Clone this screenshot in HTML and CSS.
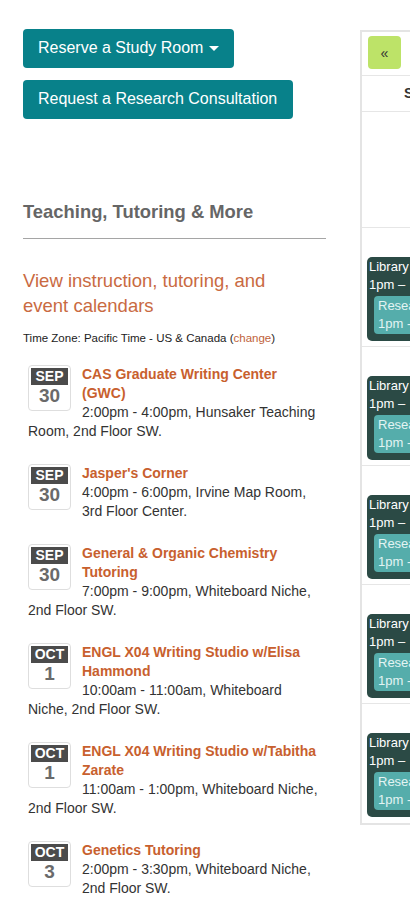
FILE: index.html
```html
<!DOCTYPE html>
<html lang="en">
<head>
<meta charset="utf-8">
<title>Library</title>
<link rel="stylesheet" href="styles.css">
</head>
<body>
<div class="page">
  <div class="left">
    <div class="buttons">
      <a class="btn" href="#">Reserve a Study Room <span class="caret"></span></a>
      <a class="btn" href="#">Request a Research Consultation</a>
    </div>
    <h2 class="heading">Teaching, Tutoring &amp; More</h2>
    <hr class="rule">
    <a class="callink" href="#">View instruction, tutoring, and event calendars</a>
    <p class="tz">Time Zone: Pacific Time - US &amp; Canada (<a href="#">change</a>)</p>
    <div class="events">
      <div class="event">
        <div class="badge"><div class="mon">SEP</div><div class="day">30</div></div>
        <a class="title" href="#">CAS Graduate Writing Center (GWC)</a>
        <div class="desc">2:00pm - 4:00pm, Hunsaker Teaching Room, 2nd Floor SW.</div>
      </div>
      <div class="event">
        <div class="badge"><div class="mon">SEP</div><div class="day">30</div></div>
        <a class="title" href="#">Jasper's Corner</a>
        <div class="desc">4:00pm - 6:00pm, Irvine Map Room, 3rd Floor Center.</div>
      </div>
      <div class="event">
        <div class="badge"><div class="mon">SEP</div><div class="day">30</div></div>
        <a class="title" href="#">General &amp; Organic Chemistry Tutoring</a>
        <div class="desc">7:00pm - 9:00pm, Whiteboard Niche, 2nd Floor SW.</div>
      </div>
      <div class="event">
        <div class="badge"><div class="mon">OCT</div><div class="day">1</div></div>
        <a class="title" href="#">ENGL X04 Writing Studio w/Elisa Hammond</a>
        <div class="desc">10:00am - 11:00am, Whiteboard Niche, 2nd Floor SW.</div>
      </div>
      <div class="event">
        <div class="badge"><div class="mon">OCT</div><div class="day">1</div></div>
        <a class="title" href="#">ENGL X04 Writing Studio w/Tabitha Zarate</a>
        <div class="desc">11:00am - 1:00pm, Whiteboard Niche, 2nd Floor SW.</div>
      </div>
      <div class="event">
        <div class="badge"><div class="mon">OCT</div><div class="day">3</div></div>
        <a class="title" href="#">Genetics Tutoring</a>
        <div class="desc">2:00pm - 3:30pm, Whiteboard Niche, 2nd Floor SW.</div>
      </div>
    </div>
  </div>
  <div class="cal">
    <div class="toolbar"><button class="prev">&laquo;</button></div>
    <div class="dayhead">Sun 9/30</div>
    <div class="row row-empty"></div>
    <div class="row"><div class="ev">Library Hours<br>1pm –&nbsp;&nbsp;5pm<div class="sub">Research Help<br>1pm - 5pm</div></div></div>
    <div class="row"><div class="ev">Library Hours<br>1pm –&nbsp;&nbsp;5pm<div class="sub">Research Help<br>1pm - 5pm</div></div></div>
    <div class="row"><div class="ev">Library Hours<br>1pm –&nbsp;&nbsp;5pm<div class="sub">Research Help<br>1pm - 5pm</div></div></div>
    <div class="row"><div class="ev">Library Hours<br>1pm –&nbsp;&nbsp;5pm<div class="sub">Research Help<br>1pm - 5pm</div></div></div>
    <div class="row"><div class="ev">Library Hours<br>1pm –&nbsp;&nbsp;5pm<div class="sub">Research Help<br>1pm - 5pm</div></div></div>
  </div>
</div>
</body>
</html>
```
FILE: styles.css
```css
html, body {
  margin: 0;
  padding: 0;
  background: #fff;
  overflow: hidden;
}
body {
  font-family: "Liberation Sans", Arial, sans-serif;
  color: #333;
  width: 410px;
  height: 910px;
}
.page {
  display: flex;
  align-items: flex-start;
  padding-top: 29px;
}
.left {
  flex: 0 0 303px;
  margin-left: 23px;
}
.buttons {
  display: flex;
  flex-direction: column;
  align-items: flex-start;
  gap: 12px;
}
.btn {
  display: inline-block;
  background: #08818a;
  color: #fff;
  text-decoration: none;
  font-size: 16px;
  line-height: 20px;
  padding: 9px 15px 10px;
  border-radius: 4px;
}
.btn:last-child {
  padding-right: 16px;
}
.caret {
  display: inline-block;
  width: 0;
  height: 0;
  border-left: 5px solid transparent;
  border-right: 5px solid transparent;
  border-top: 5px solid #fff;
  vertical-align: middle;
  margin-left: 1px;
}
.heading {
  margin: 83px 0 0;
  font-size: 18.4px;
  line-height: 20px;
  font-weight: bold;
  color: #666;
}
.rule {
  margin: 16px 0 0;
  border: 0;
  border-top: 1px solid #a5a5a5;
  height: 0;
}
.callink {
  display: block;
  margin-top: 29px;
  width: 270px;
  font-size: 18.5px;
  line-height: 25px;
  color: #c96a42;
  text-decoration: none;
}
.tz {
  margin: 12px 0 0;
  font-size: 11.5px;
  line-height: 17px;
  color: #222;
}
.tz a {
  color: #c0623a;
  text-decoration: none;
}
.events {
  margin-top: 19px;
  padding: 0 8px 0 5px;
}
.event {
  margin-bottom: 24px;
  font-size: 14px;
  line-height: 19px;
}
.event::after {
  content: "";
  display: block;
  clear: both;
}
.badge {
  float: left;
  width: 37px;
  margin: 0 11px 4px 0;
  padding: 2px 2px 3px;
  border: 1px solid #dedede;
  border-radius: 4px;
  text-align: center;
}
.mon {
  background: #4b4b4b;
  color: #fff;
  font-weight: bold;
  font-size: 14px;
  line-height: 17px;
}
.day {
  color: #6a6a6a;
  font-weight: bold;
  font-size: 19px;
  line-height: 22px;
}
.title {
  display: block;
  margin-top: -1px;
  color: #c8602e;
  font-weight: bold;
  text-decoration: none;
}
.desc {
  color: #333;
}
.cal {
  flex: 0 0 320px;
  margin-left: 34px;
  margin-top: 1px;
  border: 2px solid #e4e4e4;
  border-right: 0;
}
.toolbar {
  padding: 4px 6px 6px;
  border-bottom: 1px solid #e6e6e6;
}
.prev {
  width: 33px;
  height: 33px;
  border: 0;
  border-radius: 4px;
  background: #bde368;
  color: #333;
  font-size: 14px;
  font-family: "Liberation Sans", Arial, sans-serif;
  padding: 0;
}
.dayhead {
  height: 35px;
  line-height: 35px;
  padding-left: 42px;
  font-weight: bold;
  font-size: 14px;
  color: #333;
  border-bottom: 1px solid #e6e6e6;
}
.row {
  height: 119px;
  border-bottom: 1px solid #e6e6e6;
  padding: 29px 0 0 5px;
  box-sizing: border-box;
}
.row:last-child {
  border-bottom: 0;
}
.row-empty {
  height: 116px;
}
.ev {
  background: #2b4a45;
  color: #fff;
  font-size: 13px;
  line-height: 18px;
  padding: 1px 2px 7px 2px;
  border-radius: 5px;
  white-space: nowrap;
}
.sub {
  background: #55adab;
  color: #e3f4f3;
  margin: 2px 0 0 5px;
  padding: 1px 4px;
  border-radius: 4px;
}
```
